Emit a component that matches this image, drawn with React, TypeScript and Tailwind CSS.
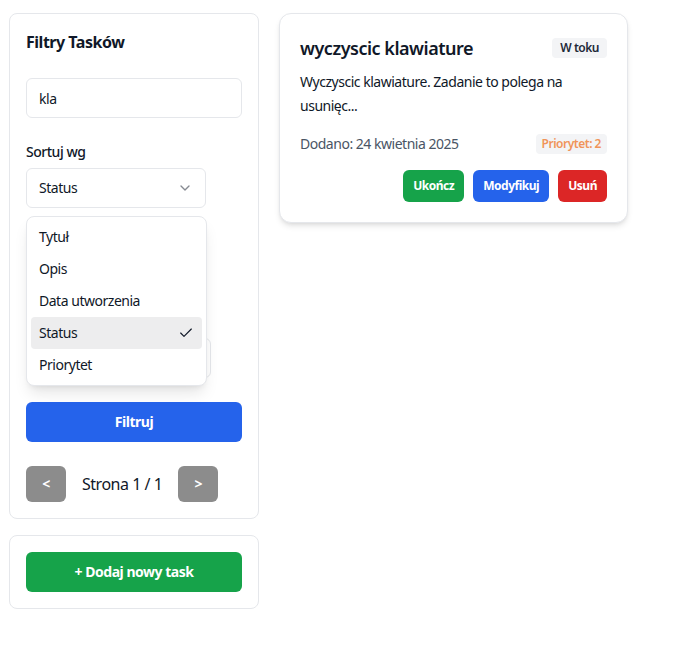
import { Check, ChevronDown } from 'lucide-react';

const sortOptions = ['Tytuł', 'Opis', 'Data utworzenia', 'Status', 'Priorytet'];

const FilterPanel = () => {
  return (
    <div className="relative rounded-lg border border-gray-200 bg-white px-4 pb-4 pt-4">
      <h2 className="text-base font-bold leading-6 text-gray-900">Filtry Tasków</h2>

      <input
        className="mt-6 h-10 w-full rounded-md border border-gray-200 px-3 text-sm text-gray-900 outline-none"
        defaultValue="kla"
      />

      <label className="mt-6 block text-sm font-medium leading-5 text-gray-900">Sortuj wg</label>
      <div className="relative mt-1.5">
        <button
          type="button"
          className="flex h-10 w-[180px] items-center justify-between rounded-md border border-gray-200 px-3 text-sm text-gray-900"
        >
          <span>Status</span>
          <ChevronDown className="h-4 w-4 opacity-50" />
        </button>

        <div className="absolute left-0 top-12 z-10 w-[181px] rounded-lg border border-gray-200 bg-white p-1 shadow-lg">
          {sortOptions.map((option) => (
            <div
              key={option}
              className={[
                'flex h-8 items-center justify-between rounded-sm px-2 text-sm text-gray-900',
                option === 'Status' ? 'bg-[#ededee]' : '',
              ].join(' ')}
            >
              <span>{option}</span>
              {option === 'Status' && <Check className="h-4 w-4" strokeWidth={1.75} />}
            </div>
          ))}
        </div>
      </div>

      <label className="mt-[110px] block text-sm font-medium leading-5 text-gray-900">Kierunek</label>
      <button
        type="button"
        className="flex h-10 w-[185px] items-center justify-between rounded-md border border-gray-200 px-3 text-sm text-gray-900"
      >
        <span>Rosnąco</span>
        <ChevronDown className="h-4 w-4 opacity-50" />
      </button>

      <button
        type="button"
        className="mt-6 h-10 w-full rounded-md bg-[#2563eb] text-sm font-bold text-white"
      >
        Filtruj
      </button>

      <div className="mt-6 flex items-center gap-4">
        <button type="button" className="h-9 w-10 rounded-md bg-[#8c8c8c] text-sm font-bold text-white">
          &lt;
        </button>
        <span className="text-base text-gray-900">Strona 1 / 1</span>
        <button type="button" className="h-9 w-10 rounded-md bg-[#8c8c8c] text-sm font-bold text-white">
          &gt;
        </button>
      </div>
    </div>
  );
};

const TaskCard = () => {
  return (
    <div className="w-[349px] rounded-xl border border-gray-200 bg-white p-5 shadow-md">
      <div className="flex items-center justify-between">
        <h3 className="text-lg font-semibold leading-7 text-gray-900">wyczyscic klawiature</h3>
        <span className="rounded bg-gray-100 px-2 py-0.5 text-xs font-semibold text-gray-800">W toku</span>
      </div>

      <p className="mt-2 text-sm leading-6 text-gray-900">
        Wyczyscic klawiature. Zadanie to polega na usunięc...
      </p>

      <div className="mt-4 flex items-center justify-between">
        <span className="text-sm leading-5 text-gray-600">Dodano: 24 kwietnia 2025</span>
        <span className="rounded bg-gray-100 px-1.5 py-0.5 text-xs font-semibold text-[#f0945a]">Priorytet: 2</span>
      </div>

      <div className="mt-4 flex justify-end gap-[9px]">
        <button type="button" className="h-8 rounded-md bg-[#16a34a] px-[10px] text-xs font-bold text-white">
          Ukończ
        </button>
        <button type="button" className="h-8 rounded-md bg-[#2563eb] px-[10px] text-xs font-bold text-white">
          Modyfikuj
        </button>
        <button type="button" className="h-8 rounded-md bg-[#dc2626] px-[10px] text-xs font-bold text-white">
          Usuń
        </button>
      </div>
    </div>
  );
};

export default function App() {
  return (
    <div className="min-h-screen bg-white pl-[9px] pt-[13px] font-['Noto_Sans',sans-serif] tracking-[-0.03em]">
      <div className="flex items-start gap-5">
        <div className="flex w-[250px] flex-col gap-4">
          <FilterPanel />
          <div className="rounded-lg border border-gray-200 bg-white p-4">
            <button
              type="button"
              className="h-10 w-full rounded-md bg-[#16a34a] text-sm font-bold text-white"
            >
              + Dodaj nowy task
            </button>
          </div>
        </div>
        <TaskCard />
      </div>
    </div>
  );
}
